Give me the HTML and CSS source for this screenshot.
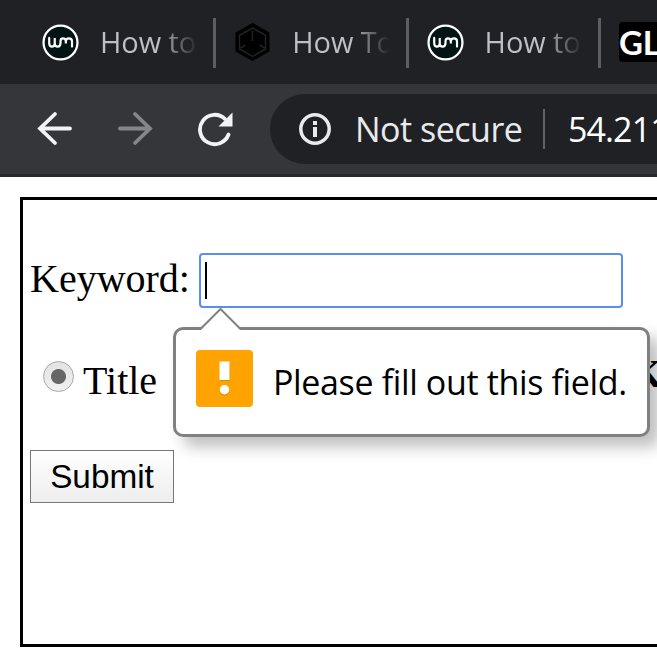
FILE: index.html
```html
<!DOCTYPE html>
<html lang="en">
<head>
<meta charset="utf-8">
<title>Keyword search</title>
<link rel="stylesheet" href="styles.css">
</head>
<body>
<svg class="defs" aria-hidden="true">
  <symbol id="wm" viewBox="0 0 36 36">
    <circle cx="18" cy="18" r="16.500" fill="#021514" stroke="#fff" stroke-width="2.200"/>
    <path d="M7 13.500v5q0 3.500 2.700 3.500t2.700-3.500V13.500v5q0 3.500 2.800 3.500t2.800-3.500V17q0-3 2.500-3t2.700 3V19V17q0-3 3-3t3 3v5" fill="none" stroke="#fff" stroke-width="2.100" stroke-linecap="round"/>
  </symbol>
</svg>
<header class="tabs">
  <div class="tab"><svg class="favicon"><use href="#wm"/></svg><span class="label">How to</span></div>
  <div class="tab">
    <svg class="favicon hex" viewBox="0 0 36 40"><path d="M18 1L35 10.500V29.500L18 39L1 29.500V10.500Z" fill="#000"/><path d="M18 6L31 13.300V27L18 34.500L5 27V13.300ZM18 9V19M6 26L11 23M30 26L25 23" fill="none" stroke="#202123" stroke-width="1.500"/></svg>
    <span class="label">How To</span>
  </div>
  <div class="tab"><svg class="favicon"><use href="#wm"/></svg><span class="label">How to</span></div>
  <div class="tab last"><span class="gl">GL</span></div>
</header>
<nav class="toolbar">
  <svg class="nav-icon" viewBox="0 0 36 36"><path d="M33 17.500H3M18 3L3 17.500L18 32" fill="none" stroke="#f1f3f4" stroke-width="3.800" stroke-linecap="round"/></svg>
  <svg class="nav-icon" viewBox="0 0 36 36"><path d="M3 17.500H33M18 3L33 17.500L18 32" fill="none" stroke="#858689" stroke-width="3.800" stroke-linecap="round"/></svg>
  <svg class="nav-icon" viewBox="0 0 36 36"><path d="M31.500 23.500A14.700 14.700 0 1 1 28 8" fill="none" stroke="#f1f3f4" stroke-width="3.800" stroke-linecap="round"/><path d="M35.500 1.500V15.500H21.500Z" fill="#f1f3f4"/></svg>
  <div class="address">
    <svg class="info" viewBox="0 0 32 32"><circle cx="16" cy="16" r="14.200" fill="none" stroke="#e8eaed" stroke-width="3.500"/><path d="M14 8h4v4h-4zM14 14h4v10h-4z" fill="#e8eaed"/></svg>
    <span class="status">Not secure</span>
    <span class="url">54.211</span>
  </div>
</nav>
<main class="page">
  <form class="panel">
    <div class="row keyword">
      <span>Keyword:</span>
      <div class="field">
        <span class="caret"></span>
        <div class="bubble">
          <svg class="arrow" viewBox="0 0 42 23"><path d="M0 22.500L20.500 1.500L41 22.500V23H0Z" fill="#fff"/><path d="M0 21.500L20.500 1L41 21.500" fill="none" stroke="#808080" stroke-width="2"/></svg>
          <svg class="warning" viewBox="0 0 57 57"><rect width="57" height="57" rx="4" fill="#ffa300"/><path d="M24 12.500h10v18.500H24z" fill="#d98d0a"/><circle cx="28.500" cy="41" r="4.700" fill="#d98d0a"/><path d="M23.500 11.500h10v18.500h-10z" fill="#fff"/><circle cx="28.500" cy="39.800" r="4.700" fill="#fff"/></svg>
          <span class="message">Please fill out this field.</span>
        </div>
      </div>
    </div>
    <div class="row options">
      <span class="radio"></span><span>Title</span><span class="next">K</span>
    </div>
    <button class="submit" type="button">Submit</button>
  </form>
</main>
</body>
</html>
```

FILE: styles.css
```css
* { box-sizing: border-box; }
body { margin: 0; height: 648px; overflow: hidden; background: #fff; }
.defs { position: absolute; width: 0; height: 0; }

.tabs { display: flex; height: 84px; padding: 18px 0 0 24px; background: #202124; overflow: hidden; }
.tab { display: flex; flex: none; align-items: center; width: 192.300px; height: 50px; padding: 0 0 2px 18px; border-right: 3px solid #5c5e61; }
.favicon { flex: none; width: 37px; height: 37px; }
.hex { height: 40px; }
.label {
  width: 98px; margin-left: 21px; overflow: hidden; white-space: nowrap;
  font: 29px/40px "Open Sans", sans-serif; letter-spacing: -0.100px; color: transparent;
  background: linear-gradient(90deg, #bdc1c6 58px, #bdc1c600 98px); background-clip: text;
}
.last { border: 0; }
.gl { width: 60px; height: 40px; border-radius: 4px; background: #000; color: #fff; font: bold 33px/40px Lato, sans-serif; }

.toolbar { display: flex; align-items: center; height: 93px; padding-left: 37px; border-bottom: 3px solid #28292c; background: #35363a; overflow: hidden; }
.nav-icon { flex: none; width: 36px; height: 36px; margin-right: 44px; }
.address { display: flex; flex: none; align-items: center; width: 420px; height: 70px; margin-left: -7px; padding-left: 29px; border-radius: 35px; background: #202124; font: 34px/46px "Open Sans", sans-serif; white-space: nowrap; }
.info { flex: none; width: 32px; height: 32px; }
.status { width: 190px; height: 40px; line-height: 40px; margin-left: 24px; border-right: 2px solid #5f6368; color: #e8eaed; letter-spacing: -0.500px; }
.url { margin-left: 23px; color: #fff; letter-spacing: -0.900px; }

.page { padding: 20px 0 0 20px; }
.panel { width: 700px; height: 450px; padding: 53px 0 0 7px; border: 3px solid #000; font: 40px/46px "Liberation Serif", serif; color: #000; }
.row { display: flex; }
.keyword { height: 55px; gap: 9px; }
.keyword > span { padding-top: 3px; width: 160px; }
.field { position: relative; width: 424px; height: 55px; padding: 7px 0 0 4px; border: 2px solid #5b8def; border-radius: 4px; background: #fff; }
.caret { display: block; width: 2px; height: 37px; background: #000; }
.bubble { position: absolute; z-index: 1; left: -28px; top: 72px; display: flex; width: 477px; height: 110px; padding: 20px 0 0 20px; border: 3px solid #808080; border-radius: 10px; background: #fff; box-shadow: 10px 10px 15px #00000040; }
.arrow { position: absolute; left: 23.500px; top: -22px; width: 42px; height: 23px; }
.warning { flex: none; width: 57px; height: 57px; }
.message { margin: 9px 0 0 20px; font: 34px/46px "Open Sans", sans-serif; letter-spacing: -0.360px; white-space: nowrap; }
.options { height: 142px; padding: 50px 0 0 13px; }
.radio { width: 31px; height: 31px; margin: 3px 9px 0 0; border: 1px solid #a8a8a8; border-radius: 50%; background: radial-gradient(circle, #666 7px, transparent 8px), linear-gradient(#e2e2e2, #f1f1f1); }
.options > span:not(.radio) { line-height: 46px; }
.options .next { margin: -7px 0 0 474px; font-weight: bold; }
.submit { display: block; width: 144px; height: 53px; padding: 0; border: 1px solid #777; border-radius: 0; background: linear-gradient(#fff, #ededed); font: 33.330px/50px "Liberation Sans", sans-serif; color: #000; }
```
